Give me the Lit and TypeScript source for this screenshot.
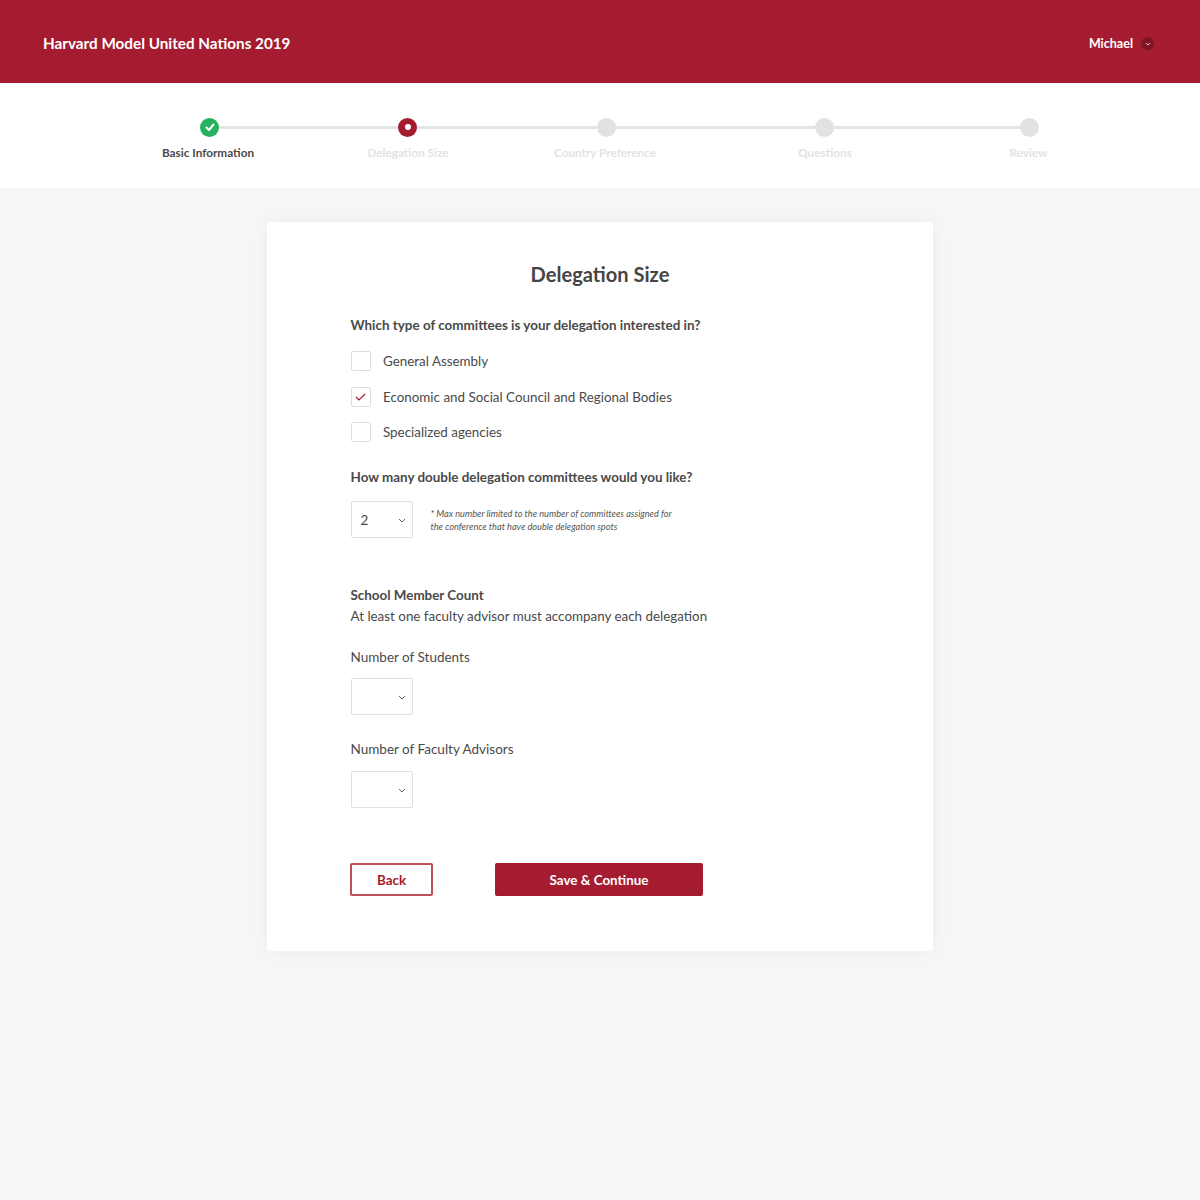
import { LitElement, html, css, svg } from "lit";
import { customElement } from "lit/decorators.js";

const chevron = svg`<svg class="chev" width="8" height="5" viewBox="0 0 8 5"><path d="M1 1l3 3 3-3" fill="none" stroke="#666" stroke-width="1"/></svg>`;

@customElement("app-root")
export class AppRoot extends LitElement {
  static styles = css`
    :host { display: block; min-height: 1200px; background: #f6f6f6; font-family: Lato, "Liberation Sans", sans-serif; color: #4a4a4a; font-variant-ligatures: common-ligatures; }
    * { box-sizing: border-box; }
    .top { height: 83px; background: #a51c30; color: #fff; display: flex; align-items: center; justify-content: space-between; padding: 2px 46px 0 43px; }
    .brand { font-size: 15.25px; font-weight: 700; }
    .user { display: flex; align-items: center; gap: 8px; font-size: 12.5px; font-weight: 700; margin-top: 2px; }
    .user-btn { width: 13px; height: 13px; border-radius: 50%; background: #7d1526; display: flex; align-items: center; justify-content: center; }
    .user-btn svg { width: 6px; height: 4px; }
    .user-btn path { stroke: #fff; }
    .stepper { height: 105px; background: #fff; padding-top: 34px; }
    .track { display: flex; align-items: center; padding-left: 200px; height: 20px; }
    .dot { width: 19px; height: 19px; border-radius: 50%; background: #e2e2e2; flex: none; display: flex; align-items: center; justify-content: center; }
    .dot.done { background: #27b25f; }
    .dot.cur { background: #a51c30; }
    .dot.cur::after { content: ""; width: 6px; height: 6px; border-radius: 50%; background: #fff; }
    .line { height: 3px; background: #e4e4e4; flex: none; }
    .labels { display: grid; grid-template-columns: 200px 200px 194px 246px 161px; padding-left: 108px; margin-top: 8px; font-size: 11.75px; font-weight: 700; color: #e3e3e3; text-align: center; line-height: 15px; }
    .labels .on { color: #4a4a4a; }
    .card { width: 666px; height: 729px; margin: 34px auto 0; background: #fff; border-radius: 3px; box-shadow: 0 0 18px rgba(0,0,0,.045); padding: 39px 83.5px 0; display: flex; flex-direction: column; }
    h1 { margin: 0; font-size: 20.1px; font-weight: 700; line-height: 26px; text-align: center; color: #454545; }
    .q { font-size: 13.43px; font-weight: 700; line-height: 18px; }
    .q1 { margin-top: 29px; }
    .opts { margin-top: 17px; display: flex; flex-direction: column; }
    .opt { display: flex; align-items: center; gap: 12.5px; height: 20px; font-size: 13.4px; }
    .opt + .opt { margin-top: 16px; }
    .opt + .opt + .opt { margin-top: 15px; }
    .box { width: 20px; height: 20px; border: 1px solid #dedede; border-radius: 2px; display: flex; align-items: center; justify-content: center; flex: none; }
    .q2 { margin-top: 26px; }
    .sel-row { display: flex; align-items: center; gap: 18px; margin-top: 15px; }
    .sel { width: 62px; height: 37px; border: 1px solid #e0e0e0; border-radius: 2px; display: flex; align-items: center; justify-content: space-between; padding: 0 6px 0 9px; font-size: 13.4px; flex: none; }
    .sel .chev { margin-left: auto; margin-top: 2px; }
    .note { font-size: 9.2px; font-style: italic; line-height: 13px; color: #555; }
    .count-h { margin-top: 48px; font-size: 13.4px; font-weight: 700; line-height: 18px; }
    .count-s { margin-top: 3px; font-size: 13.4px; line-height: 18px; }
    .lab { font-size: 13.5px; line-height: 18px; margin-top: 23px; }
    .lab + .sel { margin-top: 12px; }
    .lab.second { margin-top: 25px; }
    .lab.second + .sel { margin-top: 13px; }
    .actions { display: flex; margin: 55px 0 0 -0.5px; gap: 62px; }
    .btn { height: 33px; display: flex; align-items: center; justify-content: center; font-size: 13.4px; font-weight: 700; border-radius: 2px; font-family: inherit; }
    .back { width: 83px; border: 2px solid #c04f5e; color: #a51c30; background: #fff; }
    .save { width: 208px; background: #a51c30; color: #fff; }
  `;

  render() {
    const gaps = [179, 180, 199, 186];
    const kinds = ["done", "cur", "", "", ""];
    const labels = ["Basic Information", "Delegation Size", "Country Preference", "Questions", "Review"];
    return html`
      <div class="top">
        <div class="brand">Harvard Model United Nations 2019</div>
        <div class="user">Michael <span class="user-btn">${chevron}</span></div>
      </div>
      <div class="stepper">
        <div class="track">
          ${kinds.map((k, i) => html`
            <div class="dot ${k}">
              ${k === "done" ? html`<svg width="10" height="8" viewBox="0 0 10 8"><path d="M1 4l3 3 5-6" fill="none" stroke="#fff" stroke-width="2"/></svg>` : ""}
            </div>
            ${i < gaps.length ? html`<div class="line" style="width:${gaps[i]}px"></div>` : ""}
          `)}
        </div>
        <div class="labels">
          ${labels.map((l, i) => html`<div class=${i === 0 ? "on" : ""}>${l}</div>`)}
        </div>
      </div>
      <div class="card">
        <h1>Delegation Size</h1>
        <div class="q q1">Which type of committees is your delegation interested in?</div>
        <div class="opts">
          <div class="opt"><span class="box"></span><span class="t">General Assembly</span></div>
          <div class="opt"><span class="box"><svg width="11" height="8" viewBox="0 0 11 8"><path d="M1 4l3 3 6-6" fill="none" stroke="#a51c30" stroke-width="1.2"/></svg></span><span class="t">Economic and Social Council and Regional Bodies</span></div>
          <div class="opt"><span class="box"></span><span class="t">Specialized agencies</span></div>
        </div>
        <div class="q q2">How many double delegation committees would you like?</div>
        <div class="sel-row">
          <div class="sel">2${chevron}</div>
          <div class="note">* Max number limited to the number of committees assigned for<br />the conference that have double delegation spots</div>
        </div>
        <div class="count-h">School Member Count</div>
        <div class="count-s">At least one faculty advisor must accompany each delegation</div>
        <div class="lab">Number of Students</div>
        <div class="sel">${chevron}</div>
        <div class="lab second">Number of Faculty Advisors</div>
        <div class="sel">${chevron}</div>
        <div class="actions">
          <div class="btn back">Back</div>
          <div class="btn save">Save &amp; Continue</div>
        </div>
      </div>
    `;
  }
}
